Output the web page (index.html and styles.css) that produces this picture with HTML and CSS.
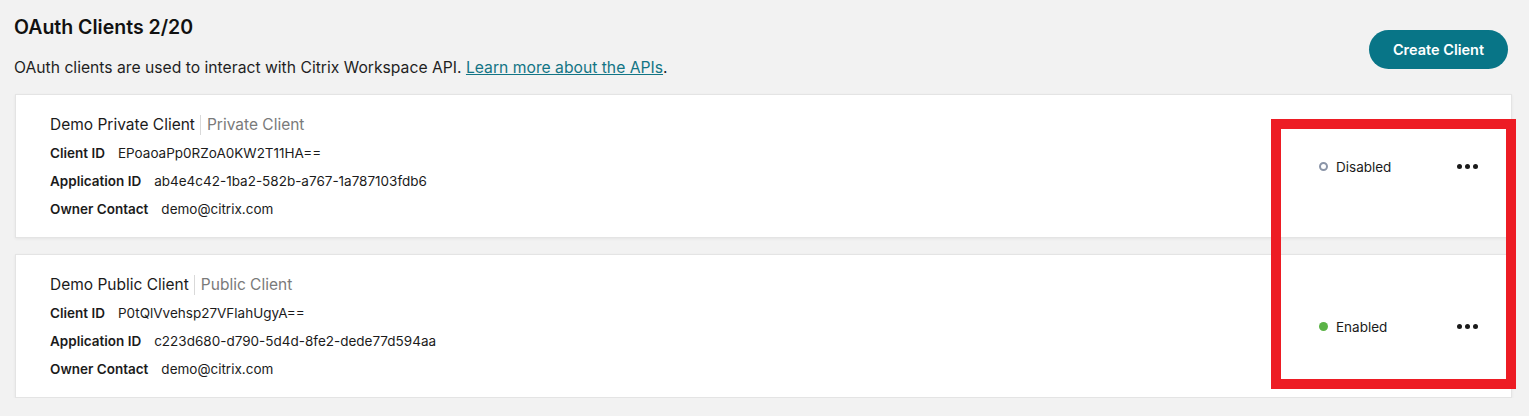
FILE: index.html
```html
<!DOCTYPE html>
<html lang="en">
<head>
<meta charset="utf-8">
<title>OAuth Clients</title>
<link rel="stylesheet" href="styles.css">
</head>
<body>
<div class="page">
  <header class="header">
    <div class="header-text">
      <h1 class="title">OAuth Clients 2/20</h1>
      <p class="subtitle">OAuth clients are used to interact with Citrix Workspace API. <a class="link" href="#">Learn more about the APIs</a>.</p>
    </div>
    <button class="btn-primary">Create Client</button>
  </header>

  <div class="list">
    <div class="card">
      <div class="card-info">
        <div class="card-title"><span class="name">Demo Private Client</span><span class="sep"></span><span class="type">Private Client</span></div>
        <div class="row"><span class="label">Client ID</span><span class="value">EPoaoaPp0RZoA0KW2T11HA==</span></div>
        <div class="row"><span class="label">Application ID</span><span class="value">ab4e4c42-1ba2-582b-a767-1a787103fdb6</span></div>
        <div class="row"><span class="label">Owner Contact</span><span class="value">demo@citrix.com</span></div>
      </div>
      <div class="card-actions">
        <div class="status"><span class="dot dot-off"></span><span>Disabled</span></div>
        <button class="more" aria-label="More"><span></span><span></span><span></span></button>
      </div>
    </div>

    <div class="card">
      <div class="card-info">
        <div class="card-title"><span class="name">Demo Public Client</span><span class="sep"></span><span class="type">Public Client</span></div>
        <div class="row"><span class="label">Client ID</span><span class="value">P0tQlVvehsp27VFlahUgyA==</span></div>
        <div class="row"><span class="label">Application ID</span><span class="value">c223d680-d790-5d4d-8fe2-dede77d594aa</span></div>
        <div class="row"><span class="label">Owner Contact</span><span class="value">demo@citrix.com</span></div>
      </div>
      <div class="card-actions">
        <div class="status"><span class="dot dot-on"></span><span>Enabled</span></div>
        <button class="more" aria-label="More"><span></span><span></span><span></span></button>
      </div>
    </div>
  </div>

  <div class="highlight"></div>
</div>
</body>
</html>
```

FILE: styles.css
```css
* { box-sizing: border-box; }

html, body {
  margin: 0;
  padding: 0;
  background: #f2f2f2;
}

body {
  font-family: Inter, Roboto, "Liberation Sans", Arial, sans-serif;
  color: #1b1b1b;
}

.page {
  position: relative;
  padding: 13px 17px 0 15px;
}

.header {
  display: flex;
  align-items: flex-start;
  justify-content: space-between;
}

.title {
  margin: 0 0 0 -1px;
  font-size: 19.5px;
  line-height: 28px;
  font-weight: 600;
  color: #111;
}

.subtitle {
  margin: 15px 0 0 -1px;
  font-size: 15.7px;
  line-height: 24px;
  color: #1f1f1f;
}

.link {
  color: #127585;
  text-decoration: underline;
}

.btn-primary {
  margin: 17px 4px 0 0;
  height: 39px;
  width: 139px;
  border: none;
  border-radius: 20px;
  background: #087587;
  color: #fff;
  font-family: inherit;
  font-size: 14.5px;
  font-weight: 600;
}

.list {
  margin-top: 14px;
  display: flex;
  flex-direction: column;
  gap: 16px;
}

.card {
  display: flex;
  align-items: center;
  justify-content: space-between;
  background: #fff;
  border: 1px solid #e4e4e4;
  box-shadow: 0 1px 3px rgba(0, 0, 0, 0.06);
  padding: 18px 33px 14px 34px;
}

.card-title {
  display: flex;
  align-items: center;
  font-size: 15.5px;
  line-height: 24px;
}

.name { color: #1b1b1b; }

.sep {
  display: inline-block;
  width: 1px;
  height: 20px;
  background: #d9d9d9;
  margin: 0 6px 0 5px;
}

.type { color: #7a7a7a; }

.row {
  font-size: 13.5px;
  line-height: 28px;
}

.card-title + .row { margin-top: 2px; }

.label {
  font-weight: 600;
  margin-right: 13px;
  color: #1b1b1b;
}

.value { color: #1b1b1b; }

.card-actions {
  display: flex;
  align-items: center;
  padding-bottom: 3px;
}

.status {
  display: flex;
  align-items: center;
  font-size: 13.5px;
  width: 138px;
  color: #1b1b1b;
}

.dot {
  display: inline-block;
  width: 9px;
  height: 9px;
  border-radius: 50%;
  margin-right: 8px;
}

.dot-off {
  border: 2px solid #8b95a8;
  background: #fff;
}

.dot-on { background: #5bb347; }

.more {
  display: flex;
  gap: 3px;
  border: none;
  background: transparent;
  padding: 0;
  width: 21px;
}

.more span {
  width: 5px;
  height: 5px;
  border-radius: 50%;
  background: #1a1a1a;
}

.highlight {
  position: absolute;
  left: 1271px;
  top: 119px;
  width: 245px;
  height: 270px;
  border: 10px solid #ed1c24;
  pointer-events: none;
}
```
